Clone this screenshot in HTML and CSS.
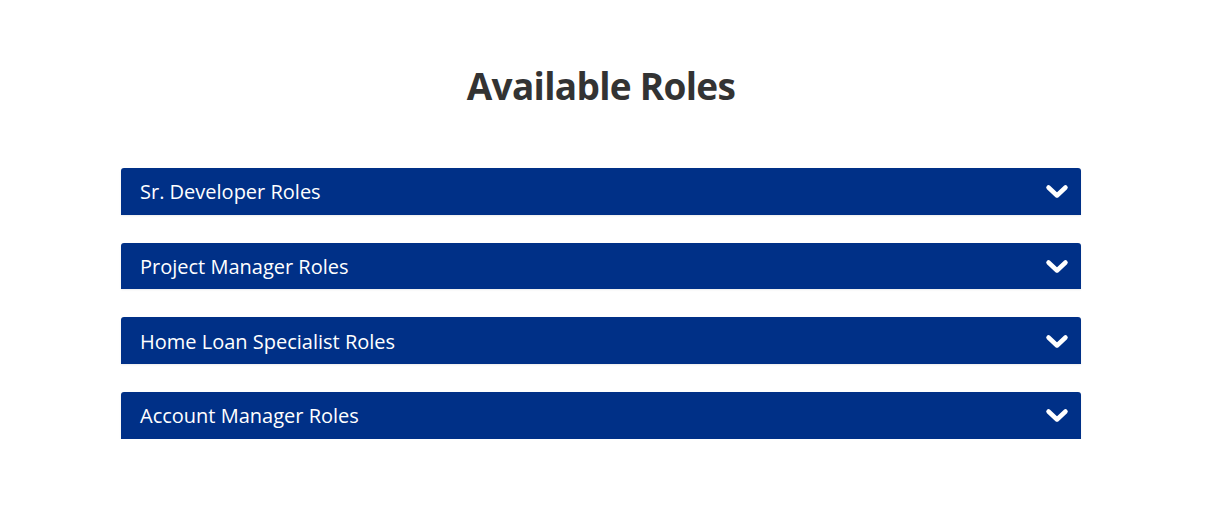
FILE: index.html
```html
<!DOCTYPE html>
<html lang="en">
<head>
<meta charset="utf-8">
<title>Available Roles</title>
<link rel="stylesheet" href="styles.css">
</head>
<body>
<main class="page">
  <h1 class="title">Available Roles</h1>
  <div class="accordion">
    <button class="panel"><span class="label">Sr. Developer Roles</span><svg class="chev" viewBox="0 0 24 16" width="24" height="16"><polyline points="3.5,3.5 12,11.5 20.5,3.5"/></svg></button>
    <button class="panel"><span class="label">Project Manager Roles</span><svg class="chev" viewBox="0 0 24 16" width="24" height="16"><polyline points="3.5,3.5 12,11.5 20.5,3.5"/></svg></button>
    <button class="panel"><span class="label">Home Loan Specialist Roles</span><svg class="chev" viewBox="0 0 24 16" width="24" height="16"><polyline points="3.5,3.5 12,11.5 20.5,3.5"/></svg></button>
    <button class="panel"><span class="label">Account Manager Roles</span><svg class="chev" viewBox="0 0 24 16" width="24" height="16"><polyline points="3.5,3.5 12,11.5 20.5,3.5"/></svg></button>
  </div>
</main>
</body>
</html>
```
FILE: styles.css
```css
html, body {
  margin: 0;
  padding: 0;
  background: #fff;
}
.page {
  width: 1202px;
  display: flex;
  flex-direction: column;
  align-items: center;
  padding-top: 62px;
}
.title {
  margin: 0;
  font-family: "Open Sans", sans-serif;
  font-weight: 700;
  font-size: 37px;
  line-height: 48px;
  color: #333333;
  letter-spacing: -0.7px;
}
.accordion {
  width: 960px;
  margin-top: 58px;
  display: flex;
  flex-direction: column;
  gap: 28px;
}
.panel {
  display: flex;
  align-items: center;
  justify-content: space-between;
  height: 46.67px;
  padding: 0 12px 0 19px;
  border: none;
  border-radius: 3px 3px 0 0;
  background: #003087;
  box-shadow: 0 1px 2px rgba(0,0,0,0.08);
  color: #fff;
  font-family: "Open Sans", sans-serif;
  font-size: 20px;
  line-height: 26px;
  text-align: left;
}
.label {
  padding-top: 2px;
}
.chev {
  margin-top: 2px;
  fill: none;
  stroke: #fff;
  stroke-width: 4.5;
  stroke-linecap: round;
  stroke-linejoin: round;
}
```
